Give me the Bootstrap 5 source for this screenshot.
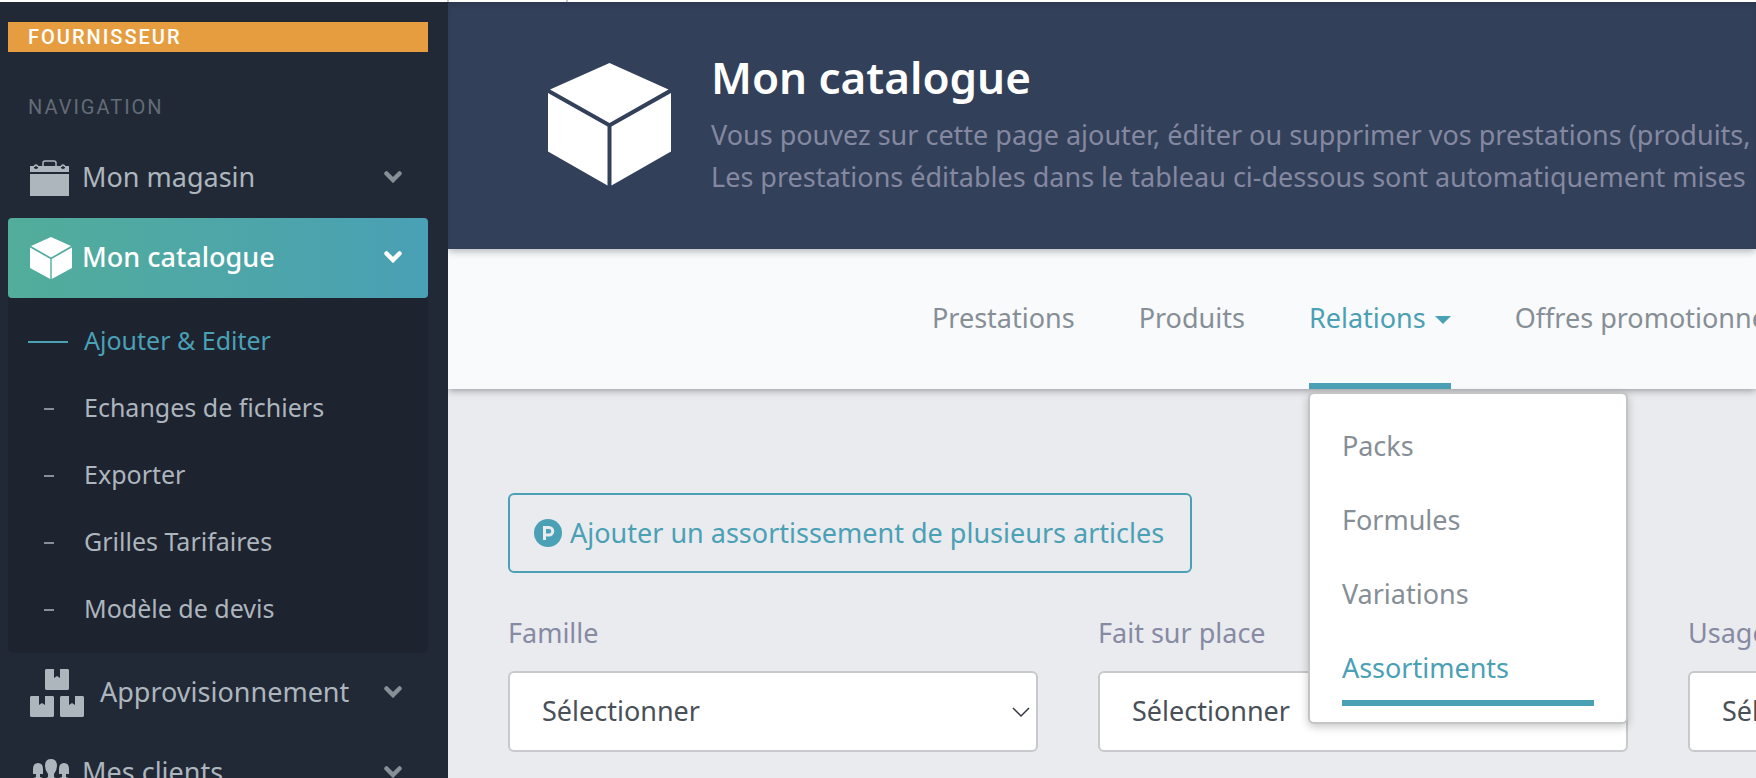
<!DOCTYPE html>
<html lang="fr">
<head>
<meta charset="utf-8">
<meta name="viewport" content="width=device-width, initial-scale=1">
<title>Mon catalogue</title>
<link href="https://cdn.jsdelivr.net/npm/bootstrap@5.3.0/dist/css/bootstrap.min.css" rel="stylesheet">
<style>
  :root { --teal: #4aa0b5; --grey: #868e96; --side: #212937; --muted: #adb5bd; }
  body { font-family: "Noto Sans", sans-serif; font-size: 27px; line-height: 42px; background: #eaebef; color: #495057; overflow: hidden; }
  a { text-decoration: none; }
  .shell { height: 100vh; }
  .topstrip { height: 2px; background: #fff; }
  .topstrip span { width: 121px; margin-left: 447px; border: solid #c8cacf; border-width: 0 2px; }
  .sidebar { width: 448px; background: var(--side); padding: 20px 20px 0 8px; }
  .side-tag, .side-head { font-family: Roboto, sans-serif; font-size: 20px; line-height: 30px; letter-spacing: 2px; padding-left: 20px; }
  .side-tag { background: #e69d3f; color: #fff; font-weight: 500; }
  .side-head { color: #646b76; margin: 40px 0 16px; }
  .side-link { height: 80px; padding: 0 26px 0 22px; color: var(--muted); gap: 10px; }
  .side-link span { padding-bottom: 2px; }
  .side-link .chev { margin: 0 0 2px auto; color: #868e96; }
  .side-link.current { color: #fff; font-weight: 500; border-radius: 4px; background: linear-gradient(90deg, #52ad9a, #4aa0b5); }
  .side-link.current .chev { color: #fff; }
  .submenu { background: #1e2330; padding: 10px 0; border-radius: 0 0 6px 6px; }
  .submenu a { height: 67px; padding: 0 0 4px 76px; font-size: 25px; color: var(--muted); position: relative; }
  .submenu a::before { content: ""; position: absolute; top: 33px; left: 36px; width: 10px; height: 2px; background: #868e96; }
  .submenu a.current { color: var(--teal); }
  .submenu a.current::before { left: 20px; width: 40px; background: var(--teal); }
  .hero { height: 247px; background: #33405a; padding: 47px 0 0 100px; gap: 40px; position: relative; z-index: 2; box-shadow: 0 2px 8px rgba(0,0,0,.3), inset 0 4px 6px -2px rgba(0,0,0,.16); }
  .hero h1 { font-size: 44px; line-height: 56px; font-weight: 600; color: #fff; margin: 0 0 9px; }
  .hero p { color: #8488a0; margin: 0; }
  .hero svg { margin-top: 14px; }
  .tabs { height: 140px; background: #f9fafc; padding-left: 484px; gap: 64px; position: relative; z-index: 1; box-shadow: 0 1px 8px rgba(0,0,0,.4); }
  .tabs > li > a { display: block; height: 140px; padding-top: 48px; color: var(--grey); }
  .tabs > li > a.current { color: var(--teal); border-bottom: 6px solid var(--teal); }
  .tabs .dropdown-toggle::after { margin-left: 9px; vertical-align: 4px; border-width: 8px 8px 0; }
  .tabs .dropdown-menu { top: 143px; left: -1px; width: 320px; padding: 16px 32px; font-size: 27px; border: 2px solid #c3c4c6; border-radius: 6px; box-shadow: 0 3px 9px rgba(0,0,0,.22); }
  .tabs .dropdown-item { height: 74px; padding: 15px 0; line-height: 42px; color: var(--grey); background: none; }
  .tabs .dropdown-item.active { color: var(--teal); border-bottom: 6px solid var(--teal); }
  .content { padding: 104px 0 0 60px; }
  .btn-add { height: 80px; font-size: 27px; color: var(--teal); border: 2px solid var(--teal); border-radius: 6px; padding: 0 26px 0 24px; gap: 8px; }
  .filters { gap: 60px; margin-top: 39px; }
  .filters > div { flex: 0 0 530px; }
  .filters label { color: #868aa3; margin-bottom: 17px; display: block; }
  .filters .form-select { height: 81px; font-size: 27px; color: #495057; padding: 0 40px 0 32px; border: 2px solid #c8c9cc; border-radius: 6px; background-size: 18px 18px; background-position: right 6px center; background-image: url("data:image/svg+xml,%3csvg xmlns='http://www.w3.org/2000/svg' viewBox='0 0 18 18'%3e%3cpath fill='none' stroke='%23343a40' stroke-width='1.500' d='M1 5 9 13l8-8'/%3e%3c/svg%3e"); }
</style>
</head>
<body>
<svg class="d-none" aria-hidden="true">
  <symbol id="cube" viewBox="0 0 123 123"><path d="M61.500 0 120.500 26.500 61.500 60 2 26.500zM0 30l59.500 33.500v59L0 88.500zM123 30 63.500 63.500v59L123 88.500z"/></symbol>
  <symbol id="cube-small" viewBox="0 0 42 42"><path d="M21 0 41 9 21 20.500 1 9zM0 10.500 20.300 22v20L0 31zM42 10.500 21.700 22v20L42 31z"/></symbol>
  <symbol id="chev" viewBox="0 0 18 12"><path d="M2.500 2.500 9 9l6.500-6.500" fill="none" stroke="currentColor" stroke-width="4.500" stroke-linecap="round"/></symbol>
  <symbol id="box" viewBox="0 0 24 21"><path d="M1 0h8v9l1.500-1 1.500-1 1.500 1L15 9V0h8l1 1v19l-1 1H1l-1-1V1z"/></symbol>
</svg>
<div class="shell d-flex flex-column">
  <div class="topstrip d-flex flex-shrink-0"><span></span></div>
  <div class="d-flex flex-grow-1">
    <nav class="sidebar flex-shrink-0" aria-label="Navigation">
      <div class="side-tag">FOURNISSEUR</div>
      <div class="side-head">NAVIGATION</div>
      <a href="#" class="side-link d-flex align-items-center">
        <svg width="42" height="36" viewBox="0 0 42 36" fill="currentColor"><path d="M0 6h4v2q2 2 4 0V6h23v2q2 2 4 0V6h4v6H0zM0 14h39v22H0z"/><path d="M13 6V3q0-2 2-2h9q2 0 2 2v3M4.500 7V6q1.500-2 3 0v1M31.500 7V6q1.500-2 3 0v1" fill="none" stroke="currentColor" stroke-width="1.500"/></svg>
        <span>Mon magasin</span><svg class="chev" width="18" height="12"><use href="#chev"/></svg></a>
      <a href="#" class="side-link current d-flex align-items-center">
        <svg width="42" height="42" fill="currentColor"><use href="#cube-small"/></svg>
        <span>Mon catalogue</span><svg class="chev" width="18" height="12"><use href="#chev"/></svg></a>
      <div class="submenu">
        <a href="#" class="current d-flex align-items-center">Ajouter &amp; Editer</a>
        <a href="#" class="d-flex align-items-center">Echanges de fichiers</a>
        <a href="#" class="d-flex align-items-center">Exporter</a>
        <a href="#" class="d-flex align-items-center">Grilles Tarifaires</a>
        <a href="#" class="d-flex align-items-center">Modèle de devis</a>
      </div>
      <a href="#" class="side-link d-flex align-items-center">
        <svg width="60" height="48" viewBox="0 0 60 48" fill="currentColor"><use href="#box" x="15" width="24" height="21"/><use href="#box" y="27" width="24" height="21"/><use href="#box" x="30" y="27" width="24" height="21"/></svg>
        <span>Approvisionnement</span><svg class="chev" width="18" height="12"><use href="#chev"/></svg></a>
      <a href="#" class="side-link d-flex align-items-center">
        <svg width="42" height="28" viewBox="0 0 42 28" fill="currentColor"><path d="M21 0q6 0 6 7 0 4-3 8v3l7 4v6H11v-6l7-4v-3q-3-4-3-8 0-7 6-7zM8 4q5 0 5 6v5h-3v3l3 1-4 4H1v-3l5-2v-3H3v-5q0-6 5-6zM34 4q-5 0-5 6v5h3v3l-3 1 4 4h8v-3l-5-2v-3h3v-5q0-6-5-6z"/></svg>
        <span>Mes clients</span><svg class="chev" width="18" height="12"><use href="#chev"/></svg></a>
    </nav>
    <main class="flex-grow-1 overflow-hidden">
      <header class="hero d-flex align-items-start">
        <svg class="flex-shrink-0" width="123" height="123" fill="#fff"><use href="#cube"/></svg>
        <div class="text-nowrap">
          <h1>Mon catalogue</h1>
          <p>Vous pouvez sur cette page ajouter, éditer ou supprimer vos prestations (produits,<br>Les prestations éditables dans le tableau ci-dessous sont automatiquement mises</p>
        </div>
      </header>
      <ul class="tabs nav flex-nowrap text-nowrap">
        <li><a href="#">Prestations</a></li>
        <li><a href="#">Produits</a></li>
        <li class="position-relative"><a href="#" class="current dropdown-toggle" aria-expanded="true">Relations</a>
          <div class="dropdown-menu show">
            <a class="dropdown-item" href="#">Packs</a>
            <a class="dropdown-item" href="#">Formules</a>
            <a class="dropdown-item" href="#">Variations</a>
            <a class="dropdown-item active" href="#">Assortiments</a>
          </div></li>
        <li><a href="#">Offres promotionnelles</a></li>
      </ul>
      <section class="content">
        <button type="button" class="btn btn-add d-inline-flex align-items-center">
          <svg width="28" height="28" viewBox="0 0 28 28"><circle cx="14" cy="14" r="14" fill="currentColor"/><path d="M10.500 21V8.500H15a3.700 3.700 0 0 1 0 7.500h-4.500" fill="none" stroke="#eaebef" stroke-width="3"/></svg>
          Ajouter un assortissement de plusieurs articles</button>
        <div class="filters d-flex">
          <div><label for="famille">Famille</label><select id="famille" class="form-select"><option>Sélectionner</option></select></div>
          <div><label for="place">Fait sur place</label><select id="place" class="form-select"><option>Sélectionner</option></select></div>
          <div><label for="usage">Usage</label><select id="usage" class="form-select"><option>Sélectionner</option></select></div>
        </div>
      </section>
    </main>
  </div>
</div>
<script src="https://cdn.jsdelivr.net/npm/bootstrap@5.3.0/dist/js/bootstrap.bundle.min.js"></script>
</body>
</html>
